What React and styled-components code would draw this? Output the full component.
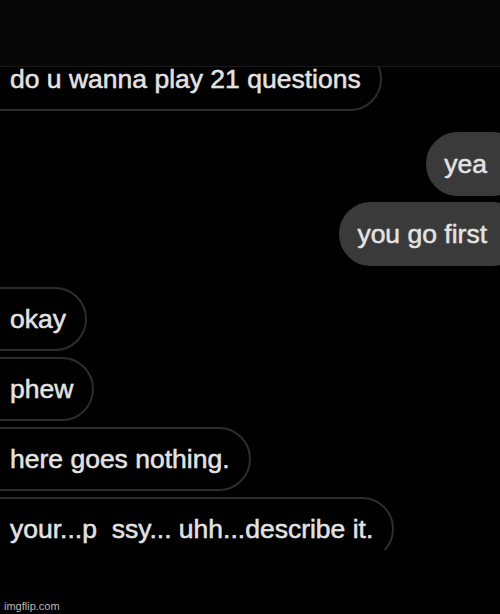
import React from 'react';
import styled, { createGlobalStyle } from 'styled-components';

const GlobalStyle = createGlobalStyle`
    html, body {
        margin: 0;
        padding: 0;
        background: #000;
    }
    #root {
        width: 500px;
        height: 614px;
    }
`;

const Screen = styled.div`
    width: 500px;
    height: 614px;
    background: #010101;
    display: flex;
    flex-direction: column;
    overflow: hidden;
    font-family: "Liberation Sans", Arial, sans-serif;
`;

const TopBar = styled.div`
    height: 66px;
    flex: none;
    background: #060606;
    border-bottom: 1px solid #1a1a1a;
`;

const Thread = styled.div`
    height: 483px;
    flex: none;
    overflow: hidden;
    display: flex;
    flex-direction: column;
`;

const Group = styled.div`
    display: flex;
    flex-direction: column;
    align-items: ${props => props.$side === 'out' ? 'flex-end' : 'flex-start'};
    gap: 6px;
    margin-top: ${props => props.$first ? '-20px' : '21px'};
`;

const Bubble = styled.div`
    box-sizing: border-box;
    height: 64px;
    display: flex;
    align-items: center;
    font-size: 26.5px;
    line-height: 28px;
    color: #e2e2e2;
    white-space: pre;
    border-radius: 32px;
    -webkit-text-stroke: 0.4px #e2e2e2;
    text-shadow: 0 0 1px rgba(255, 255, 255, 0.35);
    background: ${props => props.$side === 'out' ? '#3a3a3a' : 'transparent'};
    border: 2px solid ${props => props.$side === 'out' ? '#3a3a3a' : '#2d2d2d'};
    margin-left: ${props => props.$side === 'out' ? '0' : '-32px'};
    margin-right: ${props => props.$side === 'out' ? '-24px' : '0'};
    padding-left: ${props => props.$side === 'out' ? '16px' : '40px'};
    padding-right: ${props => props.$side === 'out' ? '35px' : '19px'};
`;

const Footer = styled.div`
    flex: 1;
    display: flex;
    align-items: flex-end;
    padding: 0 0 2px 4px;
`;

const Watermark = styled.span`
    font-family: "Liberation Sans", Arial, sans-serif;
    font-size: 11px;
    color: #b8b8b8;
`;

const conversation = [
    { side: 'in', messages: ['do u wanna play 21 questions'] },
    { side: 'out', messages: ['yea', 'you go first'] },
    {
        side: 'in',
        messages: ['okay', 'phew', 'here goes nothing.', 'your...p  ssy... uhh...describe it.'],
    },
];

const App = () => (
    <>
        <GlobalStyle />
        <Screen>
            <TopBar />
            <Thread>
                {conversation.map((group, i) => (
                    <Group key={i} $side={group.side} $first={i === 0}>
                        {group.messages.map(text => (
                            <Bubble key={text} $side={group.side}>
                                {text}
                            </Bubble>
                        ))}
                    </Group>
                ))}
            </Thread>
            <Footer>
                <Watermark>imgflip.com</Watermark>
            </Footer>
        </Screen>
    </>
);

export default App;
